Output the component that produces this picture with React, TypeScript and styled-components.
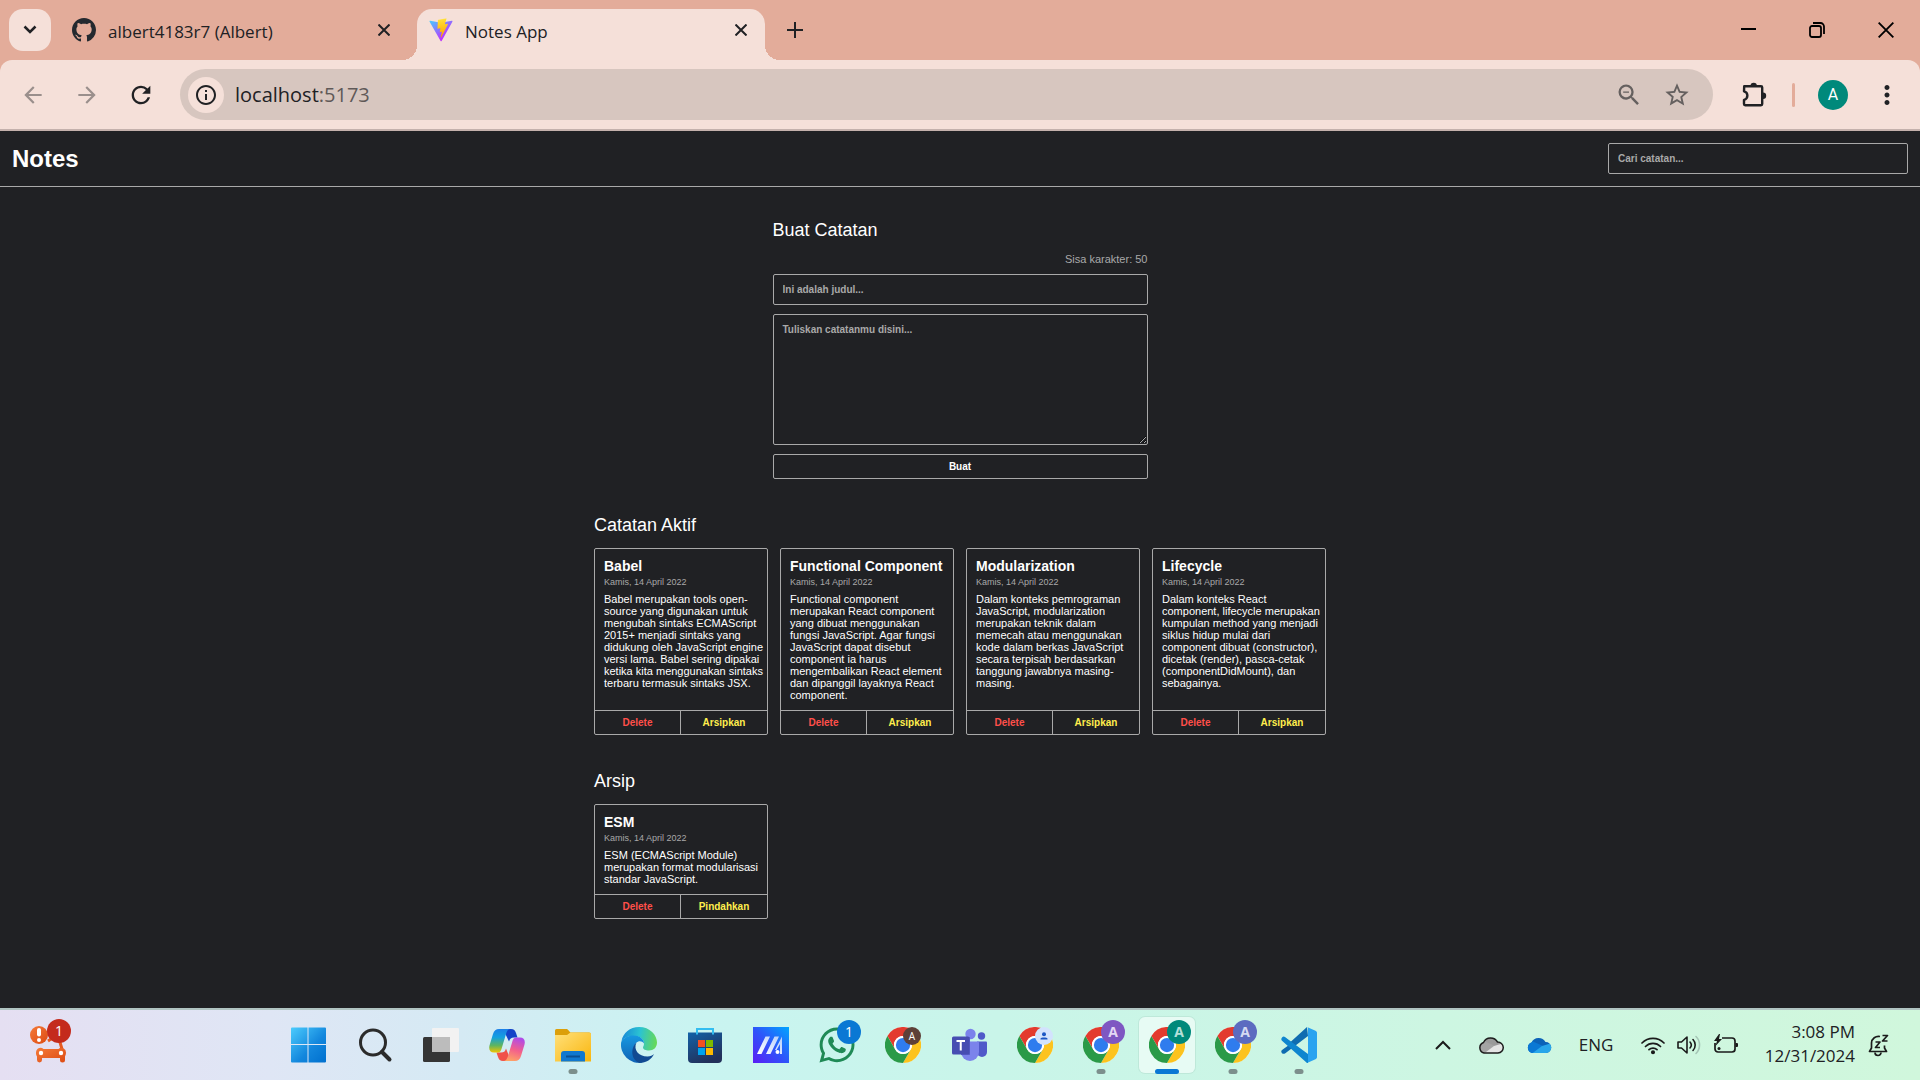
import React, { useState } from "react";
import styled, { createGlobalStyle } from "styled-components";
import {
  MdArrowBack,
  MdArrowForward,
  MdRefresh,
  MdInfoOutline,
  MdZoomOut,
  MdStarBorder,
  MdMoreVert,
} from "react-icons/md";
import { FaWhatsapp } from "react-icons/fa";

const uiFont = `"Segoe UI", "Open Sans", "Noto Sans", sans-serif`;
const pageFont = `Arial, "Liberation Sans", sans-serif`;
const ink = "#202124";
const line = "#a9a9a9";
const peach = "#e3ac9a";
const cream = "#f5e0d9";

const GlobalStyle = createGlobalStyle`
  *, *::before, *::after { box-sizing: border-box; }
  body { margin: 0; background: ${ink}; }
  button { font: inherit; color: inherit; background: none; border: 0; padding: 0; cursor: pointer; }
  h1, h2, h3, p { margin: 0; }
  svg { display: block; flex: none; }
`;

const Desktop = styled.div`
  min-height: 100vh;
  display: flex;
  flex-direction: column;
  font-family: ${uiFont};
  color: ${ink};
`;

/* ---------- browser frame ---------- */

const TabStrip = styled.div`
  display: flex;
  align-items: stretch;
  gap: 9px;
  height: 60px;
  padding: 9px 0 0 9px;
  background: ${peach};
`;

const StripButton = styled.button<{ $filled?: boolean }>`
  width: 42px;
  height: 42px;
  display: grid;
  place-items: center;
  border-radius: 14px;
  background: ${(p) => (p.$filled ? cream : "transparent")};
`;

const Tab = styled.div<{ $active?: boolean }>`
  position: relative;
  flex: 0 1 348px;
  display: flex;
  align-items: flex-start;
  padding: 0 12px;
  border-radius: 15px 15px 0 0;
  background: ${(p) => (p.$active ? cream : "transparent")};

  &::before,
  &::after {
    content: "";
    display: ${(p) => (p.$active ? "block" : "none")};
    position: absolute;
    bottom: 0;
    width: 15px;
    height: 15px;
  }
  &::before {
    right: 100%;
    background: radial-gradient(circle at 0 0, transparent 15px, ${cream} 15px);
  }
  &::after {
    left: 100%;
    background: radial-gradient(circle at 100% 0, transparent 15px, ${cream} 15px);
  }
`;

const TabLabel = styled.span`
  flex: 1;
  display: flex;
  align-items: center;
  gap: 12px;
  height: 42px;
`;

const TabTitle = styled.span`
  padding-top: 3px;
  font-size: 17px;
  line-height: 24px;
  white-space: nowrap;
`;

const TabClose = styled.button`
  width: 24px;
  height: 42px;
  display: grid;
  place-items: center;
`;

const WindowControls = styled.div`
  display: flex;
  margin-left: auto;
`;

const WindowButton = styled.button`
  width: 69px;
  height: 42px;
  display: grid;
  place-items: center;
  color: #000;
`;

const ToolbarBack = styled.div`
  background: ${peach};
`;

const Toolbar = styled.div`
  display: flex;
  align-items: center;
  height: 71px;
  padding: 0 12px;
  background: ${cream};
  border-bottom: 2px solid #c4b1ac;
  border-radius: 12px 12px 0 0;
`;

const NavGroup = styled.div`
  display: flex;
  gap: 12px;
  margin-right: 18px;
`;

const IconButton = styled.button<{ $muted?: boolean }>`
  width: 42px;
  height: 42px;
  display: grid;
  place-items: center;
  color: ${(p) => (p.$muted ? "#9a8f8c" : ink)};
`;

const Omnibox = styled.div`
  flex: 1;
  display: flex;
  align-items: center;
  height: 51px;
  padding: 0 12px 0 8px;
  border-radius: 26px;
  background: #d7c6bf;
`;

const SiteInfo = styled.button`
  width: 36px;
  height: 36px;
  display: grid;
  place-items: center;
  border-radius: 50%;
  background: ${cream};
`;

const Address = styled.span`
  flex: 1;
  padding-left: 11px;
  font-size: 20px;
  line-height: 28px;
`;

const Port = styled.span`
  color: #5f5958;
`;

const OmniButton = styled.button`
  width: 48px;
  height: 42px;
  display: grid;
  place-items: center;
  color: #65605f;
`;

const ToolbarEnd = styled.div`
  display: flex;
  align-items: center;
  gap: 17px;
  margin-left: 20px;
`;

const Divider = styled.span`
  width: 3px;
  height: 24px;
  border-radius: 2px;
  background: ${peach};
`;

const ProfileGroup = styled.div`
  display: flex;
  gap: 12px;
`;

const Avatar = styled.span`
  width: 30px;
  height: 30px;
  display: grid;
  place-items: center;
  border-radius: 50%;
  background: #00897b;
  color: #fff;
  font: 16px/20px Roboto, sans-serif;
`;

/* ---------- notes page ---------- */

const Page = styled.div`
  flex: 1;
  background: ${ink};
  color: #fff;
  font-family: ${pageFont};
`;

const PageHeader = styled.header`
  display: flex;
  align-items: center;
  justify-content: space-between;
  padding: 12px;
  border-bottom: 1px solid ${line};
`;

const Brand = styled.h1`
  font-size: 24px;
  line-height: 28px;
`;

const TextField = styled.input`
  height: 31px;
  width: 100%;
  padding: 0 9px;
  border: 1px solid ${line};
  border-radius: 2px;
  background: transparent;
  color: #fff;
  font: bold 10px/12px ${pageFont};
  outline: none;
  &::placeholder { color: ${line}; opacity: 1; }
`;

const SearchForm = styled.form`
  width: 300px;
  display: flex;
`;

const Main = styled.main`
  display: flex;
  flex-direction: column;
  align-items: center;
  gap: 35px;
  padding: 32px 12px;
`;

const Heading = styled.h2`
  margin-bottom: 11px;
  font-size: 18px;
  font-weight: 400;
  line-height: 23px;
`;

const NoteForm = styled.form`
  width: 100%;
  max-width: 375px;
  display: flex;
  flex-direction: column;
`;

const Fields = styled.div`
  display: flex;
  flex-direction: column;
  gap: 9px;
`;

const Remaining = styled.p`
  color: ${line};
  font-size: 11px;
  line-height: 12px;
  text-align: right;
`;

const BodyField = styled.textarea`
  display: block;
  width: 100%;
  height: 131px;
  padding: 9px;
  border: 1px solid ${line};
  border-radius: 2px;
  background: transparent;
  color: #fff;
  color-scheme: dark;
  font: bold 10px/12px ${pageFont};
  outline: none;
  resize: vertical;
  &::placeholder { color: ${line}; opacity: 1; }
`;

const SubmitButton = styled.button`
  height: 25px;
  border: 1px solid ${line};
  border-radius: 2px;
  font: bold 10px/12px ${pageFont};
`;

const Section = styled.section`
  width: 100%;
  max-width: 732px;
`;

const CardGrid = styled.div`
  display: grid;
  grid-template-columns: repeat(auto-fill, minmax(174px, 1fr));
  gap: 12px;
`;

const Card = styled.article`
  display: flex;
  flex-direction: column;
  border: 1px solid ${line};
  border-radius: 2px;
`;

const CardContent = styled.div`
  flex: 1;
  padding: 9px 2px 9px 9px;
`;

const CardTitle = styled.h3`
  font-size: 14px;
  line-height: 16px;
  white-space: nowrap;
`;

const CardDate = styled.p`
  margin-bottom: 3px;
  color: ${line};
  font-size: 9px;
  line-height: 16px;
`;

const CardText = styled.p`
  font-size: 11px;
  line-height: 12px;
`;

const CardActions = styled.div`
  display: grid;
  grid-template-columns: 1fr 1fr;
  border-top: 1px solid ${line};
`;

const CardButton = styled.button<{ $tone: "danger" | "accent" }>`
  height: 23px;
  color: ${(p) => (p.$tone === "danger" ? "#ff4f4a" : "#ffee4d")};
  font: bold 10px/12px ${pageFont};
  &:first-child { border-right: 1px solid ${line}; }
`;

/* ---------- taskbar ---------- */

const Taskbar = styled.footer`
  display: flex;
  align-items: center;
  height: 72px;
  border-top: 2px solid #b0c4c2;
  background: linear-gradient(90deg, #e5dff2 0%, #dfe6f5 14%, #d5eaf4 24%, #c9f4f1 36%, #c9f5e9 52%, #cdf6e2 75%, #d0f7dc 100%);
`;

const WidgetArea = styled.div`
  flex: 0 0 281px;
  padding-left: 28px;
`;

const AppRow = styled.div`
  display: flex;
  gap: 10px;
`;

const AppButton = styled.button<{ $active?: boolean }>`
  position: relative;
  width: 56px;
  height: 56px;
  display: grid;
  place-items: center;
  border-radius: 6px;
  background: ${(p) => (p.$active ? "rgba(255,255,255,0.55)" : "transparent")};
  box-shadow: ${(p) => (p.$active ? "0 0 0 1px rgba(120,160,150,0.15)" : "none")};
`;

const Indicator = styled.span<{ $active?: boolean }>`
  position: absolute;
  left: 50%;
  bottom: -1px;
  width: ${(p) => (p.$active ? 24 : 9)}px;
  height: 5px;
  border-radius: 3px;
  transform: translateX(-50%);
  background: ${(p) => (p.$active ? "#0a78d4" : "#7c8f8c")};
`;

const Badge = styled.span<{ $color: string; $text?: string; $small?: boolean }>`
  position: absolute;
  top: ${(p) => (p.$small ? 10 : 3)}px;
  right: ${(p) => (p.$small ? 10 : 4)}px;
  width: ${(p) => (p.$small ? 18 : 24)}px;
  height: ${(p) => (p.$small ? 18 : 24)}px;
  display: grid;
  place-items: center;
  border-radius: 50%;
  background: ${(p) => p.$color};
  color: ${(p) => p.$text || "#fff"};
  font-size: ${(p) => (p.$small ? 10 : 14)}px;
  font-weight: ${(p) => (p.$text ? 700 : 400)};
  line-height: 16px;
`;

const WidgetButton = styled.button`
  position: relative;
  display: block;
  width: 48px;
  height: 56px;
`;

const WidgetBadge = styled(Badge)`
  top: 2px;
  right: 5px;
`;

const Tray = styled.div`
  display: flex;
  align-items: center;
  margin-left: auto;
  padding-right: 29px;
`;

const TrayButton = styled.button`
  width: 48px;
  height: 56px;
  display: grid;
  place-items: center;
`;

const Language = styled.button`
  width: 66px;
  height: 56px;
  font-size: 17px;
  line-height: 24px;
`;

const Status = styled.button`
  display: flex;
  align-items: center;
  gap: 12px;
  height: 56px;
  padding: 0 24px 0 12px;
`;

const Clock = styled.button`
  width: 92px;
  padding-bottom: 2px;
  text-align: right;
  font-size: 17px;
  line-height: 24px;
`;

const Bell = styled.button`
  width: 24px;
  height: 56px;
  margin-left: 12px;
`;

/* ---------- drawings ---------- */

const Cross = ({ size = 12, weight = 2 }: { size?: number; weight?: number }) => (
  <svg width={size} height={size} viewBox="0 0 12 12" stroke="currentColor" strokeWidth={weight}>
    <path d="M.5.5l11 11M11.5.5l-11 11" />
  </svg>
);

const GitHubMark = () => (
  <svg width="24" height="24" viewBox="0 0 16 16" fill="#24292f">
    <path d="M8 0C3.580 0 0 3.580 0 8c0 3.540 2.290 6.530 5.470 7.590.4.07.55-.17.55-.38 0-.19-.01-.82-.01-1.490-2.010.37-2.530-.49-2.690-.94-.09-.23-.48-.94-.82-1.130-.28-.15-.68-.52-.01-.53.63-.01 1.080.58 1.230.82.72 1.210 1.870.87 2.330.66.07-.52.28-.87.51-1.070-1.780-.2-3.640-.89-3.640-3.950 0-.87.31-1.590.82-2.150-.08-.2-.36-1.020.08-2.120 0 0 .67-.21 2.200.82.64-.18 1.320-.27 2-.27.68 0 1.360.09 2 .27 1.530-1.040 2.200-.82 2.200-.82.44 1.100.16 1.920.08 2.120.51.56.82 1.270.82 2.150 0 3.070-1.870 3.750-3.650 3.950.29.25.54.73.54 1.480 0 1.070-.01 1.930-.01 2.200 0 .21.15.46.55.38A8.013 8.013 0 0016 8c0-4.420-3.580-8-8-8z" />
  </svg>
);

const ViteLogo = () => (
  <svg width="24" height="24" viewBox="0 0 410 404">
    <defs>
      <linearGradient id="viteA" x1="6" y1="33" x2="235" y2="344" gradientUnits="userSpaceOnUse">
        <stop stopColor="#41D1FF" />
        <stop offset="1" stopColor="#BD34FE" />
      </linearGradient>
      <linearGradient id="viteB" x1="194" y1="9" x2="236" y2="293" gradientUnits="userSpaceOnUse">
        <stop stopColor="#FFEA83" />
        <stop offset=".083" stopColor="#FFDD35" />
        <stop offset="1" stopColor="#FFA800" />
      </linearGradient>
    </defs>
    <path fill="url(#viteA)" d="M399.641 59.5246L215.643 388.545C211.844 395.338 202.084 395.378 198.228 388.618L10.5817 59.5563C6.38087 52.1896 12.6802 43.2665 21.0281 44.7586L205.223 77.6824C206.398 77.8924 207.601 77.8904 208.776 77.6763L389.119 44.8058C397.439 43.2894 403.768 52.1434 399.641 59.5246Z" />
    <path fill="url(#viteB)" d="M292.965 1.5744L156.801 28.2552C154.563 28.6937 152.906 30.5903 152.771 32.8664L144.395 174.33C144.198 177.662 147.258 180.248 150.51 179.498L188.42 170.749C191.967 169.931 195.172 173.055 194.443 176.622L183.18 231.775C182.422 235.487 185.907 238.661 189.532 237.56L212.947 230.446C216.577 229.344 220.065 232.527 219.297 236.242L201.398 322.875C200.278 328.294 207.486 331.249 210.492 326.603L212.5 323.5L323.454 102.072C325.312 98.3645 322.108 94.137 318.036 94.9228L279.014 102.454C275.347 103.161 272.227 99.746 273.262 96.1583L298.731 7.86689C299.767 4.27314 296.636 0.855181 292.965 1.5744Z" />
  </svg>
);

const Puzzle = () => (
  <svg width="26" height="26" viewBox="0 0 26 26">
    <path d="M3.2 4.2H20a1.2 1.2 0 011.2 1.2V22a1.2 1.2 0 01-1.2 1.2H4.2A1.2 1.2 0 013 22v-4.2a4.3 4.3 0 000-8.4z" fill="none" stroke={ink} strokeWidth="2.4" strokeLinejoin="round" />
    <path d="M9.5 4a3.2 3.2 0 016.4 0zM22 10.5a3.2 3.2 0 010 6.4z" fill={ink} />
  </svg>
);

const ChromeLogo = () => (
  <svg width="36" height="36" viewBox="0 0 48 48">
    <circle cx="24" cy="24" r="24" fill="#fff" />
    <path fill="#e33b2e" d="M3.2 12A24 24 0 0144.8 12H24a12 12 0 00-10.4 18z" />
    <path fill="#fcc31e" d="M44.8 12A24 24 0 0124 48l10.4-18A12 12 0 0024 12z" />
    <path fill="#2a9a48" d="M24 48A24 24 0 013.2 12l10.4 18A12 12 0 0034.4 30z" />
    <circle cx="24" cy="24" r="12" fill="#fff" />
    <circle cx="24" cy="24" r="9.5" fill="#2f7cee" />
  </svg>
);

const CarWidget = () => (
  <svg width="48" height="56" viewBox="0 0 48 56">
    <defs>
      <linearGradient id="car" x1="0" y1="0" x2="1" y2="1">
        <stop stopColor="#f47b3a" />
        <stop offset="1" stopColor="#dd4a12" />
      </linearGradient>
    </defs>
    <circle cx="11" cy="18" r="9" fill="url(#car)" />
    <rect x="9" y="11" width="4" height="8.5" rx="2" fill="#fff" />
    <circle cx="11" cy="23" r="2" fill="#fff" />
    <path d="M20 24l3-2h8l3 10" fill="none" stroke="#e65a20" strokeWidth="3" />
    <path fill="url(#car)" d="M10 31.500a4.500 4.500 0 015.500.5h15a4.500 4.500 0 017.500 3.500c0 2-.700 3-1 4V43a2.500 2.500 0 01-5 0v-2H14v2a2.500 2.500 0 01-5 0v-3.500C8 38 7 34 10 31.500z" />
    <circle cx="13" cy="36" r="2.2" fill="#fff" />
    <circle cx="33" cy="36" r="2.2" fill="#fff" />
  </svg>
);

const WindowsLogo = () => (
  <svg width="36" height="36" viewBox="1.5 0.5 36 36">
    <defs>
      <linearGradient id="win" x1="0" y1="0" x2="36" y2="36" gradientUnits="userSpaceOnUse">
        <stop stopColor="#4fd0ff" />
        <stop offset=".6" stopColor="#1387dd" />
        <stop offset="1" stopColor="#0070cf" />
      </linearGradient>
    </defs>
    <path fill="url(#win)" d="M2.5 1H18v16.500H1.500V2a1 1 0 011-1zM19 1h16.500a1 1 0 011 1v15.500H19zM1.500 18.500H18V36H2.500a1 1 0 01-1-1zM19 18.500h17.500V35a1 1 0 01-1 1H19z" />
  </svg>
);

const SearchGlass = () => (
  <svg width="36" height="36" viewBox="0 0 36 36" fill="none" stroke="#2b2b2b">
    <circle cx="16" cy="15.5" r="12.5" strokeWidth="3" />
    <path d="M25 25l7.5 7.5" strokeWidth="4" strokeLinecap="round" />
  </svg>
);

const TaskView = () => (
  <svg width="36" height="36" viewBox="0 0 36 36">
    <rect x="0" y="10" width="27" height="25" rx="1.5" fill="#353535" />
    <rect x="9" y="1" width="27" height="24" rx="1" fill="#f2f2f2" />
    <path d="M9 10h18v15H9z" fill="#bcbcbc" />
  </svg>
);

const Copilot = () => (
  <svg width="36" height="36" viewBox="0 0 36 36">
    <defs>
      <linearGradient id="copA" x1="0" y1="0" x2="0" y2="1">
        <stop stopColor="#1c7fe8" />
        <stop offset=".35" stopColor="#13a0e0" />
        <stop offset=".7" stopColor="#5fb560" />
        <stop offset="1" stopColor="#f1c400" />
      </linearGradient>
      <linearGradient id="copB" x1=".6" y1="0" x2=".3" y2="1">
        <stop stopColor="#b04be8" />
        <stop offset=".5" stopColor="#f3608c" />
        <stop offset="1" stopColor="#ffa664" />
      </linearGradient>
    </defs>
    <path fill="#1443c8" d="M14 2h8c3 0 4 1.500 5 4l1.500 4.500H25c-3 0-4 1-5 4z" />
    <path fill="#f0524a" d="M22 34h-8c-3 0-4-1.500-5-4l-1.500-4.500H12c3 0 4-1 5-4z" />
    <path fill="url(#copA)" d="M10 2h12c-3 0-4 2-5 5l-4.500 15c-1 3-2 3.500-5 3.500H5c-4 0-5.500-3-4.500-7L4 7c1-3.500 3-5 6-5z" />
    <path fill="url(#copB)" d="M26 34H14c3 0 4-2 5-5l4.500-15c1-3 2-3.500 5-3.500H31c4 0 5.500 3 4.500 7L32 29c-1 3.500-3 5-6 5z" />
  </svg>
);

const Folder = () => (
  <svg width="36" height="36" viewBox="0 0 36 36">
    <defs>
      <linearGradient id="fold" x1="0" y1="0" x2="1" y2="1">
        <stop stopColor="#ffe07a" />
        <stop offset="1" stopColor="#f9b60e" />
      </linearGradient>
    </defs>
    <path d="M0 3.500A1.500 1.500 0 011.500 2H11c1.500 0 2 .5 3 2l1.500 1.500H34a2 2 0 012 2V12H0z" fill="#dc9f0a" />
    <path d="M0 8h12l3.500-2.500H34.500A1.500 1.500 0 0136 7v27.500H0z" fill="url(#fold)" />
    <path d="M6 34.500V27a3 3 0 013-3h18a3 3 0 013 3v7.500z" fill="#1078d0" />
    <path d="M11 29.500h14" stroke="#0a4f93" strokeWidth="2" />
  </svg>
);

const Edge = () => (
  <svg width="36" height="36" viewBox="0 0 36 36">
    <defs>
      <linearGradient id="edgeA" x1="0" y1=".4" x2="1" y2=".5">
        <stop stopColor="#1689d8" />
        <stop offset=".5" stopColor="#2bc3d2" />
        <stop offset="1" stopColor="#68d957" />
      </linearGradient>
      <linearGradient id="edgeB" x1="0" y1="0" x2="0" y2="1">
        <stop stopColor="#1798e0" />
        <stop offset="1" stopColor="#0f62b5" />
      </linearGradient>
    </defs>
    <path d="M.5 14C2 6 9 0 18 0c11 0 18 8 18 15.500 0 5-3.500 8-8 8-3.500 0-6-1.300-6-3 0-1 1-1.500 1-4C23 12 19 9 13 9 7 9 3 11 .5 14z" fill="url(#edgeA)" />
    <path d="M.2 15C2 11 7 8.500 12.500 8.500 18.500 8.500 23 12 23 16.500c-2-3-5.500-3-8-.5-4 5-1 14 6.500 19.500A18 18 0 01.2 15z" fill="url(#edgeB)" />
    <path d="M15.500 15.500c-3.500 7 2 14 11 14 3 0 5-1 6.500-2.500C31 32 25 36 18.500 36 9 32 10 20 15.500 15.500z" fill="#114a92" />
  </svg>
);

const Store = () => (
  <svg width="36" height="36" viewBox="0 0 36 36">
    <defs>
      <linearGradient id="store" x1="0" y1="0" x2=".5" y2="1">
        <stop stopColor="#1262a8" />
        <stop offset="1" stopColor="#22305a" />
      </linearGradient>
    </defs>
    <path d="M1 5.500h34V32a4 4 0 01-4 4H5a4 4 0 01-4-4z" fill="url(#store)" />
    <path d="M9 1h18v6.500H25V3H11v4.500H9z" fill="#33bdf0" />
    <path d="M11 13h7v7h-7z" fill="#f25022" />
    <path d="M19 13h7v7h-7z" fill="#7fba00" />
    <path d="M11 21h7v7h-7z" fill="#00a4ef" />
    <path d="M19 21h7v7h-7z" fill="#ffb900" />
  </svg>
);

const MyAsus = () => (
  <svg width="36" height="36" viewBox="0 0 36 36">
    <defs>
      <linearGradient id="asus" x1="0" y1="1" x2="1" y2="0">
        <stop stopColor="#5b1df5" />
        <stop offset=".5" stopColor="#2e55fa" />
        <stop offset="1" stopColor="#00a5ff" />
      </linearGradient>
      <linearGradient id="asusLine" x1="0" y1="1" x2="1" y2="0">
        <stop stopColor="#fff" />
        <stop offset="1" stopColor="#b6cdfc" />
      </linearGradient>
    </defs>
    <path d="M0 0h36v36H0z" fill="url(#asus)" />
    <path d="M4 27L12.500 9.500H17L8.500 27zM13 27L21.500 9.500H26L17.500 27zM22 23l7-13.500V27h-2V17l-3.500 6z" fill="url(#asusLine)" />
    <circle cx="24.5" cy="25" r="2" fill="#fff" />
  </svg>
);

const Teams = () => (
  <svg width="36" height="36" viewBox="0 0 36 36">
    <circle cx="19.5" cy="7" r="5.2" fill="#7b83eb" />
    <circle cx="30.5" cy="9" r="3.7" fill="#5059c9" />
    <path d="M26 14.500h9a1 1 0 011 1V25a5 5 0 01-10 0z" fill="#5059c9" />
    <path d="M10 14.500h17a1 1 0 011 1V25a9 9 0 01-18 0z" fill="#7b83eb" />
    <path d="M10 10h9v18h-9z" fill="#5c63cf" />
    <rect x="1" y="9.5" width="17.5" height="18" rx="1.5" fill="#474db2" />
    <path d="M5.500 14h8.500M9.750 14v9.500" stroke="#fff" strokeWidth="2" />
  </svg>
);

const VsCode = () => (
  <svg width="36" height="36" viewBox="0 0 36 36">
    <path d="M26 0L9.500 15 4 10.500 1 12l7 6-7 5c-1 .8-1 2 0 3.200 1 .9 2.200.8 3 .2L27 9z" fill="#0f6cb0" />
    <path d="M1.200 10.200c.9-.8 2-.9 3 0L27 27v9h-1L1 13.800c-1-1-.9-2.500.2-3.600z" fill="#0f86cf" />
    <path d="M26 0l8.500 3.800c1 .5 1.500 1.200 1.500 2.200v24c0 1-.5 1.700-1.500 2.200L26 36c.5-.2 1-.5 1-1.500v-33C27 .5 26.500.2 26 0z" fill="#2aa3f0" />
  </svg>
);

const Person = () => (
  <svg width="10" height="10" viewBox="0 0 10 10" fill="#1b56c4">
    <circle cx="5" cy="3.2" r="2" />
    <path d="M1.500 8.500V7.500C1.500 6 8.500 6 8.500 7.500v1z" />
  </svg>
);

const cloudOutline = "M6 18a5.500 5.500 0 01-.5-10.500A8 8 0 0119.500 7a5.500 5.500 0 01.5 11z";

const Cloud = ({ grey }: { grey?: boolean }) => (
  <svg width="26" height="20" viewBox="0 0 26 20">
    <defs>
      <clipPath id={grey ? "cloudGrey" : "cloudBlue"}>
        <path d={cloudOutline} />
      </clipPath>
    </defs>
    <g clipPath={`url(#${grey ? "cloudGrey" : "cloudBlue"})`}>
      <path d="M0 0h26v20H0z" fill={grey ? "#9a9a9a" : "#0b62b8"} />
      <path d="M0 7l6-1 11 5-10 8H0z" fill={grey ? "#a4a4a4" : "#0a78d4"} />
      <path d="M4 20l12-9 10-3v12z" fill={grey ? "#e4e4e4" : "#28a6ea"} />
    </g>
    {grey && <path d={cloudOutline} fill="none" stroke="#1d1d1d" strokeWidth="1.5" />}
  </svg>
);

const Wifi = () => (
  <svg width="24" height="20" viewBox="0 0 24 20" fill="none" stroke="#1b1b1b" strokeWidth="1.7" strokeLinecap="round">
    <path d="M1 8a15.500 15.500 0 0122 0M4.500 11.500a10.500 10.500 0 0115 0M8 14.700a5.700 5.700 0 018 0" />
    <circle cx="12" cy="17.3" r="1.2" fill="#1b1b1b" />
  </svg>
);

const Speaker = () => (
  <svg width="24" height="20" viewBox="0 0 24 20" fill="none" stroke="#1b1b1b" strokeWidth="1.6" strokeLinecap="round" strokeLinejoin="round">
    <path d="M1 7h3.500L10 2v16l-5.500-5H1z" />
    <path d="M13 7a4.500 4.500 0 010 6M16 4.500a8 8 0 010 11" />
    <path d="M19 1.500a12 12 0 010 17" stroke="#a5c6b6" />
  </svg>
);

const Battery = () => (
  <svg width="26" height="22" viewBox="0 0 26 22">
    <path d="M9 4h10a3 3 0 013 3v8a3 3 0 01-3 3H5a3 3 0 01-3-3V9" fill="none" stroke="#1b1b1b" strokeWidth="1.7" />
    <path d="M22.500 9h1.500a1 1 0 011 1v2a1 1 0 01-1 1h-1.500z" fill="#1b1b1b" />
    <path d="M6 0L1 7h3l-1.500 5L9 5H6L7 0z" fill="#1b1b1b" />
    <circle cx="6" cy="14.5" r="1.5" fill="#1b1b1b" />
  </svg>
);

const BellSleep = () => (
  <svg width="24" height="24" viewBox="0 0 24 24" fill="none" stroke="#1b1b1b" strokeWidth="1.7" strokeLinejoin="round">
    <path d="M13 3.500A7 7 0 004.500 10v5L2.500 18.500h17L17.500 15v-2.500" />
    <path d="M8 19.500a3 3 0 006 0" />
    <path d="M8.500 9h4.500l-4.500 5.500H13M15.500 2.500h5l-5 5.500h5" />
  </svg>
);

/* ---------- data ---------- */

type Note = { title: string; text: string; archived: boolean };

const notes: Note[] = [
  {
    title: "Babel",
    text: "Babel merupakan tools open-source yang digunakan untuk mengubah sintaks ECMAScript 2015+ menjadi sintaks yang didukung oleh JavaScript engine versi lama. Babel sering dipakai ketika kita menggunakan sintaks terbaru termasuk sintaks JSX.",
    archived: false,
  },
  {
    title: "Functional Component",
    text: "Functional component merupakan React component yang dibuat menggunakan fungsi JavaScript. Agar fungsi JavaScript dapat disebut component ia harus mengembalikan React element dan dipanggil layaknya React component.",
    archived: false,
  },
  {
    title: "Modularization",
    text: "Dalam konteks pemrograman JavaScript, modularization merupakan teknik dalam memecah atau menggunakan kode dalam berkas JavaScript secara terpisah berdasarkan tanggung jawabnya masing-masing.",
    archived: false,
  },
  {
    title: "Lifecycle",
    text: "Dalam konteks React component, lifecycle merupakan kumpulan method yang menjadi siklus hidup mulai dari component dibuat (constructor), dicetak (render), pasca-cetak (componentDidMount), dan sebagainya.",
    archived: false,
  },
  {
    title: "ESM",
    text: "ESM (ECMAScript Module) merupakan format modularisasi standar JavaScript.",
    archived: true,
  },
];

type TaskbarApp = {
  name: string;
  icon: React.ReactNode;
  running?: boolean;
  active?: boolean;
  badge?: { color: string; text?: string; small?: boolean; content: React.ReactNode };
};

const apps: TaskbarApp[] = [
  { name: "Start", icon: <WindowsLogo /> },
  { name: "Search", icon: <SearchGlass /> },
  { name: "Task view", icon: <TaskView /> },
  { name: "Copilot", icon: <Copilot /> },
  { name: "File Explorer", icon: <Folder />, running: true },
  { name: "Edge", icon: <Edge /> },
  { name: "Store", icon: <Store /> },
  { name: "MyASUS", icon: <MyAsus /> },
  { name: "WhatsApp", icon: <FaWhatsapp size={40} color="#1f8a56" />, badge: { color: "#0a78d4", content: "1" } },
  { name: "Chrome", icon: <ChromeLogo />, badge: { color: "#5d4037", small: true, content: "A" } },
  { name: "Teams", icon: <Teams /> },
  { name: "Chrome profiles", icon: <ChromeLogo />, badge: { color: "#d3e3fd", small: true, content: <Person /> } },
  { name: "Chrome, violet profile", icon: <ChromeLogo />, running: true, badge: { color: "#7e57c2", text: "#e3d8f5", content: "A" } },
  { name: "Chrome, green profile", icon: <ChromeLogo />, running: true, active: true, badge: { color: "#00897b", text: "#b5e0da", content: "A" } },
  { name: "Chrome, indigo profile", icon: <ChromeLogo />, running: true, badge: { color: "#5c6bc0", text: "#d5daf2", content: "A" } },
  { name: "Visual Studio Code", icon: <VsCode />, running: true },
];

const NoteCard = ({ note }: { note: Note }) => (
  <Card>
    <CardContent>
      <CardTitle>{note.title}</CardTitle>
      <CardDate>Kamis, 14 April 2022</CardDate>
      <CardText>{note.text}</CardText>
    </CardContent>
    <CardActions>
      <CardButton $tone="danger">Delete</CardButton>
      <CardButton $tone="accent">{note.archived ? "Pindahkan" : "Arsipkan"}</CardButton>
    </CardActions>
  </Card>
);

const NotesPage = () => {
  const [title, setTitle] = useState("");
  return (
    <Page>
      <PageHeader>
        <Brand>Notes</Brand>
        <SearchForm>
          <TextField type="text" aria-label="Cari catatan" placeholder="Cari catatan..." />
        </SearchForm>
      </PageHeader>
      <Main>
        <NoteForm onSubmit={(e) => e.preventDefault()}>
          <Heading>Buat Catatan</Heading>
          <Fields>
            <Remaining>Sisa karakter: {50 - title.length}</Remaining>
            <TextField
              type="text"
              aria-label="Judul"
              placeholder="Ini adalah judul..."
              maxLength={50}
              value={title}
              onChange={(e) => setTitle(e.target.value)}
            />
            <BodyField aria-label="Isi catatan" placeholder="Tuliskan catatanmu disini..." />
            <SubmitButton type="submit">Buat</SubmitButton>
          </Fields>
        </NoteForm>
        <Section>
          <Heading>Catatan Aktif</Heading>
          <CardGrid>
            {notes.filter((n) => !n.archived).map((n) => <NoteCard key={n.title} note={n} />)}
          </CardGrid>
        </Section>
        <Section>
          <Heading>Arsip</Heading>
          <CardGrid>
            {notes.filter((n) => n.archived).map((n) => <NoteCard key={n.title} note={n} />)}
          </CardGrid>
        </Section>
      </Main>
    </Page>
  );
};

export default function App() {
  return (
    <Desktop>
      <GlobalStyle />
      <TabStrip>
        <StripButton $filled aria-label="Search tabs">
          <svg width="14" height="10" viewBox="0 0 14 10" fill="none" stroke={ink} strokeWidth="2.5">
            <path d="M1.5 1.5L7 7l5.5-5.5" />
          </svg>
        </StripButton>
        <Tab>
          <TabLabel><GitHubMark /><TabTitle>albert4183r7 (Albert)</TabTitle></TabLabel>
          <TabClose aria-label="Close tab"><Cross /></TabClose>
        </Tab>
        <Tab $active>
          <TabLabel><ViteLogo /><TabTitle>Notes App</TabTitle></TabLabel>
          <TabClose aria-label="Close tab"><Cross /></TabClose>
        </Tab>
        <StripButton aria-label="New tab">
          <svg width="16" height="16" viewBox="0 0 16 16" stroke={ink} strokeWidth="2"><path d="M0 8h16M8 0v16" /></svg>
        </StripButton>
        <WindowControls>
          <WindowButton aria-label="Minimize">
            <svg width="16" height="16" viewBox="0 0 16 16" stroke="#000" strokeWidth="2"><path d="M1 7h15" /></svg>
          </WindowButton>
          <WindowButton aria-label="Restore">
            <svg width="16" height="16" viewBox="0 0 16 16" fill="none" stroke="#000" strokeWidth="1.8">
              <rect x="1" y="4" width="11" height="11" rx="2" />
              <path d="M4 1h7.5A3.5 3.5 0 0115 4.500V12" />
            </svg>
          </WindowButton>
          <WindowButton aria-label="Close"><Cross size={16} weight={1.4} /></WindowButton>
        </WindowControls>
      </TabStrip>
      <ToolbarBack>
        <Toolbar>
          <NavGroup>
            <IconButton $muted aria-label="Back"><MdArrowBack size={26} /></IconButton>
            <IconButton $muted aria-label="Forward"><MdArrowForward size={26} /></IconButton>
            <IconButton aria-label="Reload"><MdRefresh size={28} /></IconButton>
          </NavGroup>
          <Omnibox>
            <SiteInfo aria-label="Site information"><MdInfoOutline size={24} /></SiteInfo>
            <Address>localhost<Port>:5173</Port></Address>
            <OmniButton aria-label="Zoom"><MdZoomOut size={28} /></OmniButton>
            <OmniButton aria-label="Bookmark"><MdStarBorder size={28} /></OmniButton>
          </Omnibox>
          <ToolbarEnd>
            <IconButton aria-label="Extensions"><Puzzle /></IconButton>
            <Divider />
            <ProfileGroup>
              <IconButton aria-label="Profile"><Avatar>A</Avatar></IconButton>
              <IconButton aria-label="Menu"><MdMoreVert size={30} /></IconButton>
            </ProfileGroup>
          </ToolbarEnd>
        </Toolbar>
      </ToolbarBack>
      <NotesPage />
      <Taskbar>
        <WidgetArea>
          <WidgetButton aria-label="Widgets">
            <CarWidget />
            <WidgetBadge $color="#c42b1c">1</WidgetBadge>
          </WidgetButton>
        </WidgetArea>
        <AppRow>
          {apps.map((a) => (
            <AppButton key={a.name} aria-label={a.name} $active={a.active}>
              {a.icon}
              {a.badge && (
                <Badge $color={a.badge.color} $text={a.badge.text} $small={a.badge.small}>{a.badge.content}</Badge>
              )}
              {a.running && <Indicator $active={a.active} />}
            </AppButton>
          ))}
        </AppRow>
        <Tray>
          <TrayButton aria-label="Hidden icons">
            <svg width="16" height="10" viewBox="0 0 16 10" fill="none" stroke="#1b1b1b" strokeWidth="2"><path d="M1 9l7-7 7 7" /></svg>
          </TrayButton>
          <TrayButton aria-label="Cloud"><Cloud grey /></TrayButton>
          <TrayButton aria-label="OneDrive"><Cloud /></TrayButton>
          <Language>ENG</Language>
          <Status aria-label="Network, sound and battery"><Wifi /><Speaker /><Battery /></Status>
          <Clock>3:08 PM<br />12/31/2024</Clock>
          <Bell aria-label="Notifications"><BellSleep /></Bell>
        </Tray>
      </Taskbar>
    </Desktop>
  );
}
